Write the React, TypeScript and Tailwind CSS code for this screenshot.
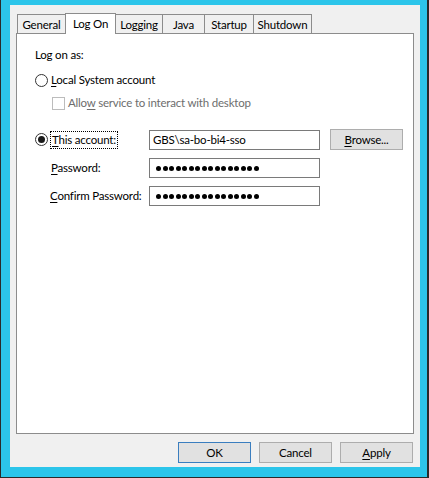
import type { ReactNode } from "react";

const tabs = [
  { label: "General", w: "w-[49px]" },
  { label: "Log On", w: "w-[51px]", active: true },
  { label: "Logging", w: "w-[48px]" },
  { label: "Java", w: "w-[43px]" },
  { label: "Startup", w: "w-[50px]" },
  { label: "Shutdown", w: "w-[59px]" },
];

function Radio({ checked }: { checked?: boolean }) {
  return (
    <span className="flex h-[13px] w-[13px] items-center justify-center rounded-full border border-[#333333] bg-white">
      {checked && <span className="h-[7px] w-[7px] rounded-full bg-[#1a1a1a]" />}
    </span>
  );
}

function Dots() {
  return (
    <span className="flex gap-[1.5px] pl-[6px]">
      {Array.from({ length: 16 }).map((_, i) => (
        <span key={i} className="h-[5px] w-[5px] rounded-full bg-black" />
      ))}
    </span>
  );
}

function Field({ children }: { children: ReactNode }) {
  return (
    <div className="flex h-[20px] w-[171px] items-center border border-[#7a7a7a] bg-white">
      {children}
    </div>
  );
}

function Button({ children, primary }: { children: ReactNode; primary?: boolean }) {
  return (
    <button
      className={`flex h-[21px] w-[73px] items-center justify-center border bg-[#e1e1e1] text-black ${
        primary ? "border-[#3a7ebf]" : "border-[#adadad]"
      }`}
    >
      {children}
    </button>
  );
}

export default function App() {
  return (
    <div
      className="h-[478px] w-[429px] border-b border-l border-r-2 border-[#2a2a2a] bg-[#2cc5ea] pb-[10px] pl-[9px] pr-[7px] pt-[5px] text-[11.5px] leading-[16px] tracking-[-0.2px] text-black"
      style={{ fontFamily: 'Lato, "Noto Sans", sans-serif' }}
    >
      <div className="flex h-full flex-col bg-[#f0f0f0] px-[6px] pt-[8px]">
        {/* Tab strip */}
        <div className="relative z-10 flex h-[20px] items-end pl-[1px] whitespace-nowrap">
          {tabs.map((t, i) =>
            t.active ? (
              <div
                key={t.label}
                className={`-ml-px -mb-px flex h-[21px] ${t.w} items-start justify-center border border-b-0 border-[#8c8c8c] bg-white pt-[2px]`}
              >
                {t.label}
              </div>
            ) : (
              <div
                key={t.label}
                className={`${i > 0 ? "-ml-px" : ""} flex h-[19px] ${t.w} items-center justify-center border border-b-0 border-[#8c8c8c] bg-[#f0f0f0] pt-[1px]`}
              >
                {t.label}
              </div>
            ),
          )}
        </div>

        {/* Tab page */}
        <div className="flex h-[401px] flex-col border border-[#8c8c8c] bg-white pl-[18px] pt-[13px] whitespace-nowrap">
          <div className="h-[16px]">Log on as:</div>

          <div className="mt-[9px] flex h-[16px] items-center gap-[3px]">
            <Radio />
            <span>
              <u className="underline-offset-2">L</u>ocal System account
            </span>
          </div>

          <div className="mt-[7px] flex h-[16px] items-center gap-[3px] pl-[17px] text-[#6d6d6d]">
            <span className="h-[13px] w-[13px] border border-[#bcbcbc] bg-white" />
            <span>
              Allo<u className="underline-offset-2">w</u> service to interact with desktop
            </span>
          </div>

          <div className="mt-[18px] grid grid-cols-[16px_98px_171px_83px] items-center gap-y-[8px]">
            <Radio checked />
            <div className="flex">
              <span className="-ml-px border border-dotted border-black px-px">
                <u className="underline-offset-2">T</u>his account:
              </span>
            </div>
            <Field>
              <span className="pl-[3px]">GBS\sa-bo-bi4-sso</span>
            </Field>
            <div className="pl-[10px]">
              <Button>
                <u className="underline-offset-2">B</u>rowse...
              </Button>
            </div>

            <span />
            <span>
              <u className="underline-offset-2">P</u>assword:
            </span>
            <Field>
              <Dots />
            </Field>
            <span />

            <span />
            <span className="-ml-px">
              <u className="underline-offset-2">C</u>onfirm Password:
            </span>
            <Field>
              <Dots />
            </Field>
            <span />
          </div>
        </div>

        {/* Dialog buttons */}
        <div className="mt-[8px] flex justify-end gap-[8px] pr-[1px]">
          <Button primary>OK</Button>
          <Button>Cancel</Button>
          <Button>
            <u className="underline-offset-2">A</u>pply
          </Button>
        </div>
      </div>
    </div>
  );
}
